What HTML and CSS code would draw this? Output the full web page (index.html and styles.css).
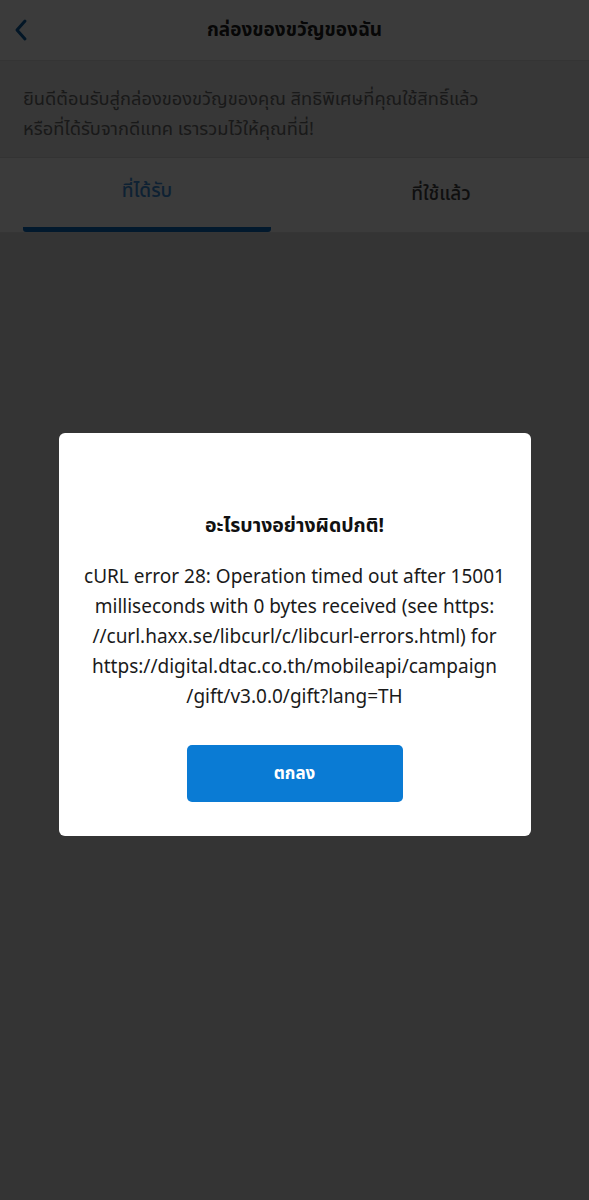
FILE: index.html
```html
<!DOCTYPE html>
<html lang="th">
<head>
  <meta charset="UTF-8">
  <meta name="viewport" content="width=device-width, initial-scale=1.0">
  <title>กล่องของขวัญของฉัน</title>
  <link rel="stylesheet" href="styles.css">
</head>
<body>
  <div id="page">
    <div id="top-bar">
      <span class="back">
        <svg width="14" height="24" viewBox="0 0 14 24">
          <path d="M11 3 L3 12 L11 21" fill="none" stroke="currentColor" stroke-width="3" stroke-linecap="round" stroke-linejoin="round"/>
        </svg>
      </span>
      <div class="title">กล่องของขวัญของฉัน</div>
    </div>
    <div id="intro">
      ยินดีต้อนรับสู่กล่องของขวัญของคุณ สิทธิพิเศษที่คุณใช้สิทธิ์แล้ว<br>
      หรือที่ได้รับจากดีแทค เรารวมไว้ให้คุณที่นี่!
    </div>
    <div id="tabs">
      <div class="tab active">ที่ได้รับ</div>
      <div class="tab">ที่ใช้แล้ว</div>
    </div>
    <div id="content"></div>
  </div>

  <div id="backdrop">
    <div id="dialog">
      <div class="dialog-title">อะไรบางอย่างผิดปกติ!</div>
      <div class="dialog-text">
        cURL error 28: Operation timed out after 15001 milliseconds with 0 bytes received (see https: //curl.haxx.se/libcurl/c/libcurl-errors.html) for https://digital.dtac.co.th/mobileapi/campaign /gift/v3.0.0/gift?lang=TH
      </div>
      <button type="button" class="ok-btn">ตกลง</button>
    </div>
  </div>
</body>
</html>
```

FILE: styles.css
```css
* {
  box-sizing: border-box;
}

body {
  margin: 0;
  font-family: "Noto Sans", "Noto Sans Thai", "Loma", sans-serif;
  background: #dedede;
}

#page {
  min-height: 1200px;
  display: flex;
  flex-direction: column;
}

#top-bar {
  height: 61px;
  background: #fff;
  border-bottom: 1px solid #e0e0e0;
  display: flex;
  align-items: center;
  justify-content: center;
  position: relative;
}

#top-bar .back {
  position: absolute;
  left: 14px;
  top: 18px;
  color: #0d5fa3;
}

#top-bar .title {
  font-size: 19px;
  font-weight: bold;
  color: #222;
}

#intro {
  background: #ebebeb;
  padding: 22px 23px 14px;
  font-size: 18.3px;
  line-height: 30px;
  color: #6e6e6e;
  border-bottom: 1px solid #dcdcdc;
}

#tabs {
  display: flex;
  background: #fff;
  height: 75px;
  padding: 0 0 0 23px;
  border-bottom: 1px solid #e6e6e6;
}

#tabs .tab {
  flex: 1;
  display: flex;
  align-items: center;
  justify-content: center;
  padding: 0 0 2px 22px;
  font-size: 19px;
  font-weight: 500;
  color: #444;
}

#tabs .tab.active {
  flex: 0 0 248px;
  padding-left: 0;
  color: #3d8fdc;
  border-bottom: 5px solid #0a6dc4;
  border-radius: 3px;
}

#content {
  flex: 1;
  background: #dedede;
}

#backdrop {
  position: fixed;
  inset: 0;
  background: rgba(0, 0, 0, 0.77);
  display: flex;
  align-items: flex-start;
  justify-content: center;
  padding-top: 433px;
}

#dialog {
  width: 472px;
  background: #fff;
  border-radius: 6px;
  padding: 77px 20px 34px;
  text-align: center;
}

#dialog .dialog-title {
  font-size: 19.5px;
  font-weight: bold;
  line-height: 30px;
  color: #111;
}

#dialog .dialog-text {
  margin-top: 21px;
  font-size: 19px;
  line-height: 30px;
  color: #1a1a1a;
}

#dialog .ok-btn {
  margin-top: 34px;
  width: 216px;
  height: 57px;
  border: none;
  border-radius: 5px;
  background: #0a7bd4;
  color: #fff;
  font-family: inherit;
  font-size: 17px;
  font-weight: bold;
  cursor: pointer;
}
```
